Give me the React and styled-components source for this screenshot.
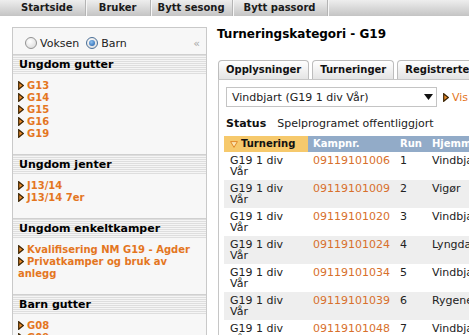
import React from "react";
import styled, { createGlobalStyle } from "styled-components";

const Global = createGlobalStyle`
  html, body { margin: 0; padding: 0; background: #fff; overflow: hidden; }
  body { font-family: "DejaVu Sans", Verdana, sans-serif; font-size: 11px; color: #000; }
`;

const Nav = styled.nav`
  display: flex;
  height: 16px;
  padding-left: 9px;
  background: linear-gradient(#eeeeee, #c4c4c4);
`;

const NavItem = styled.a`
  display: block;
  padding: 0 ${(p) => p.$pad}px;
  font-weight: bold;
  font-size: 10px;
  line-height: 16px;
  color: #1a1a1a;
  border-right: 1px solid #b4b4b4;
  box-shadow: 1px 0 0 #f6f6f6;
  white-space: nowrap;
`;

const Content = styled.div`
  display: flex;
  align-items: flex-start;
  gap: 6px;
  padding: 11px 0 0 12px;
`;

const Sidebar = styled.aside`
  width: 193px;
  flex-shrink: 0;
  border: 1px solid #c9c9c9;
  background: #f7f7f7;
`;

const RadioRow = styled.div`
  display: flex;
  align-items: center;
  height: 26px;
  box-sizing: border-box;
  padding: 4px 6px 0 12px;
`;

const RadioLabel = styled.label`
  display: flex;
  align-items: center;
  gap: 3px;
  margin-right: 7px;
  color: #222;
`;

const Radio = styled.span`
  position: relative;
  width: 12px;
  height: 12px;
  box-sizing: border-box;
  border-radius: 50%;
  border: 1px solid ${(p) => (p.$checked ? "#4a6f97" : "#929292")};
  background: radial-gradient(circle at 40% 35%, #ffffff, #d6d6d6);
  &::after {
    content: "";
    display: ${(p) => (p.$checked ? "block" : "none")};
    position: absolute;
    left: 2px;
    top: 2px;
    width: 6px;
    height: 6px;
    border-radius: 50%;
    background: radial-gradient(circle at 40% 35%, #8cc0f0, #1b5aa6);
  }
`;

const Collapse = styled.span`
  margin-left: auto;
  color: #a8a8a8;
  font-size: 11px;
`;

const SectionHeader = styled.div`
  height: 20px;
  box-sizing: border-box;
  border-top: 1px solid #d0d0d0;
  padding-left: 6px;
  background: repeating-linear-gradient(to bottom, #dedede 0 1px, #f5f5f5 1px 2px);
  font-weight: bold;
  font-size: 11px;
  line-height: 19px;
  color: #000;
`;

const SectionList = styled.ul`
  list-style: none;
  margin: 0;
  padding: 6px 8px 14px 5px;
`;

const SideLink = styled.li`
  font-weight: bold;
  font-size: 10px;
  line-height: 12px;
  color: #e4761f;
`;

const Arrow = ({ className }) => (
  <svg className={className} width="6" height="9" viewBox="0 0 6 9">
    <polygon points="0.7,0.7 5.3,4.5 0.7,8.3" fill="#e88a2c" stroke="#3a2200" strokeWidth="1.2" />
  </svg>
);

const InlineArrow = styled(Arrow)`
  display: inline-block;
  vertical-align: -1px;
  margin-right: 3px;
`;

const Main = styled.main`
  flex: 1;
  min-width: 0;
  overflow: hidden;
`;

const Heading = styled.h1`
  margin: 0;
  padding-left: 4px;
  font-size: 12px;
  line-height: 14px;
  font-weight: bold;
  white-space: nowrap;
`;

const Tabs = styled.div`
  display: flex;
  gap: 3px;
  margin: 19px 0 0 5px;
  white-space: nowrap;
`;

const Tab = styled.div`
  height: 19px;
  box-sizing: border-box;
  padding: 0 7px;
  border: 1px solid #bdbdbd;
  border-bottom: none;
  border-radius: 4px 4px 0 0;
  background: linear-gradient(#ffffff, #e4e4e4);
  font-weight: bold;
  font-size: 10px;
  line-height: 18px;
  color: #111;
`;

const Panel = styled.div`
  margin-left: 5px;
  width: 420px;
  border-left: 1px solid #c6c6c6;
  border-top: 1px solid #c6c6c6;
  padding: 7px 0 0 5px;
`;

const SelectRow = styled.div`
  display: flex;
  align-items: center;
  margin-left: 2px;
  white-space: nowrap;
`;

const Select = styled.div`
  display: flex;
  align-items: center;
  justify-content: space-between;
  width: 211px;
  height: 20px;
  box-sizing: border-box;
  border: 1px solid #c4c4c4;
  background: #fff;
  padding: 0 3px 0 5px;
  color: #222;
`;

const VisLink = styled.a`
  margin-left: 3px;
  color: #e4761f;
`;

const SideArrow = styled(Arrow)`
  margin-left: 6px;
`;

const StatusRow = styled.div`
  display: flex;
  gap: 11px;
  margin: 10px 0 0 2px;
  line-height: 14px;
  color: #222;
  white-space: nowrap;
`;

const Bold = styled.span`
  font-weight: bold;
  color: #111;
`;

const Table = styled.table`
  margin-top: 5px;
  border-collapse: collapse;
  table-layout: fixed;
  width: 330px;
`;

const Th = styled.th`
  height: 16px;
  padding: 0 5px 0 ${(p) => (p.$first ? 6 : 5)}px;
  text-align: left;
  font-size: 10px;
  font-weight: bold;
  line-height: 16px;
  white-space: nowrap;
  color: ${(p) => (p.$first ? "#111" : "#fff")};
  background: ${(p) => (p.$first ? "#f6c96c" : "#92abc8")};
`;

const SortIcon = styled.svg`
  vertical-align: -1px;
  margin-right: 3px;
`;

const Tr = styled.tr`
  background: ${(p) => (p.$alt ? "#eeeeee" : "#ffffff")};
`;

const Td = styled.td`
  vertical-align: top;
  height: 22px;
  padding: 3px 7px 3px ${(p) => (p.$first ? 6 : 5)}px;
  line-height: 11px;
  color: #222;
  white-space: ${(p) => (p.$first ? "normal" : "nowrap")};
  overflow: hidden;
`;

const MatchLink = styled.a`
  color: #d8702c;
`;

const sections = [
  { title: "Ungdom gutter", items: ["G13", "G14", "G15", "G16", "G19"] },
  { title: "Ungdom jenter", items: ["J13/14", "J13/14 7er"] },
  { title: "Ungdom enkeltkamper", items: ["Kvalifisering NM G19 - Agder", "Privatkamper og bruk av anlegg"] },
  { title: "Barn gutter", items: ["G08", "G09", "G10", "G11"] },
];

const matches = [
  ["09119101006", "1", "Vindbjart"],
  ["09119101009", "2", "Vigør"],
  ["09119101020", "3", "Vindbjart"],
  ["09119101024", "4", "Lyngdal"],
  ["09119101034", "5", "Vindbjart"],
  ["09119101039", "6", "Rygene"],
  ["09119101048", "7", "Vindbjart"],
];

const navItems = [
  ["Startside", 12],
  ["Bruker", 13],
  ["Bytt sesong", 7],
  ["Bytt passord", 11],
];

export default function App() {
  return (
    <>
      <Global />
      <Nav>
        {navItems.map(([t, p]) => (
          <NavItem key={t} $pad={p}>{t}</NavItem>
        ))}
      </Nav>
      <Content>
        <Sidebar>
          <RadioRow>
            <RadioLabel>
              <Radio />
              Voksen
            </RadioLabel>
            <RadioLabel>
              <Radio $checked />
              Barn
            </RadioLabel>
            <Collapse>«</Collapse>
          </RadioRow>
          {sections.map((s) => (
            <section key={s.title}>
              <SectionHeader>{s.title}</SectionHeader>
              <SectionList>
                {s.items.map((it) => (
                  <SideLink key={it}>
                    <InlineArrow />
                    {it}
                  </SideLink>
                ))}
              </SectionList>
            </section>
          ))}
        </Sidebar>
        <Main>
          <Heading>Turneringskategori - G19</Heading>
          <Tabs>
            <Tab>Opplysninger</Tab>
            <Tab>Turneringer</Tab>
            <Tab>Registrerte lag</Tab>
          </Tabs>
          <Panel>
            <SelectRow>
              <Select>
                <span>Vindbjart (G19 1 div Vår)</span>
                <svg width="9" height="6" viewBox="0 0 9 6">
                  <polygon points="0,0 9,0 4.5,6" fill="#111" />
                </svg>
              </Select>
              <SideArrow />
              <VisLink>Vis alle</VisLink>
            </SelectRow>
            <StatusRow>
              <Bold>Status</Bold>
              <span>Spelprogramet offentliggjort</span>
            </StatusRow>
            <Table>
              <colgroup>
                <col style={{ width: 84 }} />
                <col style={{ width: 87 }} />
                <col style={{ width: 32 }} />
                <col style={{ width: 127 }} />
              </colgroup>
              <thead>
                <tr>
                  <Th $first>
                    <SortIcon width="8" height="7" viewBox="0 0 8 7">
                      <polygon points="0.6,0.6 7.4,0.6 4,6.4" fill="#fbe3b0" stroke="#e08a2a" strokeWidth="1" />
                    </SortIcon>
                    Turnering
                  </Th>
                  <Th>Kampnr.</Th>
                  <Th>Run</Th>
                  <Th>Hjemmelag</Th>
                </tr>
              </thead>
              <tbody>
                {matches.map(([nr, run, home], i) => (
                  <Tr key={nr} $alt={i % 2 === 1}>
                    <Td $first>G19 1 div Vår</Td>
                    <Td><MatchLink>{nr}</MatchLink></Td>
                    <Td>{run}</Td>
                    <Td>{home}</Td>
                  </Tr>
                ))}
              </tbody>
            </Table>
          </Panel>
        </Main>
      </Content>
    </>
  );
}
